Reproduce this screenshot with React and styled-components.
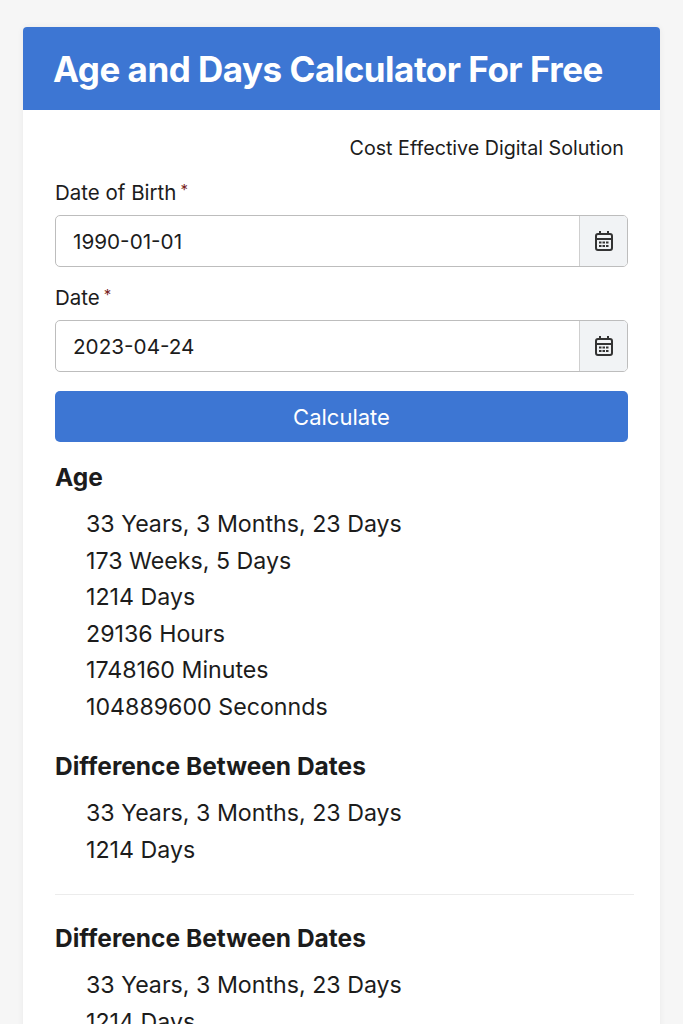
import React from "react";
import styled, { createGlobalStyle } from "styled-components";

const G = createGlobalStyle`
  body { margin:0; background:#f6f6f6; font-family: Inter, "Noto Sans", sans-serif; color:#1c1c1c; }
`;
const Card = styled.div`
  margin: 27px 23px 0 23px; background:#fff; border-radius:4px 4px 0 0;
  box-shadow: 0 0 6px rgba(0,0,0,0.06); min-height: 1000px;
`;
const Header = styled.div`
  background:#3d76d3; color:#fff; height:83px; display:flex; align-items:center;
  padding:0 30px; font-size:35px; font-weight:700; letter-spacing:-0.5px; border-radius:4px 4px 0 0;
`;
const Body = styled.div`padding: 26px 32px 0 32px;`;
const Tag = styled.div`text-align:right; font-size:19.7px; margin-right:4px; margin-bottom:20px;`;
const Label = styled.div`font-size:20.5px; margin-bottom:10px; span{color:#7a1f1f;font-size:15px;margin-left:4px;vertical-align:top;}`;
const Group = styled.div`
  display:flex; height:50px; border:1px solid #bdbdbd; border-radius:5px; overflow:hidden; margin-bottom:${p=>p.mb}px;
`;
const Input = styled.div`flex:1; display:flex; align-items:center; padding-left:17px; font-size:20.7px;`;
const Addon = styled.div`width:47px; border-left:1px solid #cfcfcf; background:#f1f3f5; display:flex; align-items:center; justify-content:center;`;
const Button = styled.div`
  height:51px; background:#3d76d3; border-radius:5px; color:#fff; font-size:22px;
  display:flex; align-items:center; justify-content:center; margin-bottom:20px;
`;
const H = styled.div`font-size:24.5px; font-weight:700; margin-top:${p=>p.mt||0}px; margin-bottom:${p=>p.mb||12}px;`;
const List = styled.div`padding-left:31px; font-size:23.2px; line-height:36.5px;`;
const Divider = styled.hr`border:none; border-top:1px solid #ececec; margin:26px -6px 28px 0;`;

const Cal = () => (
  <svg width="20" height="22" viewBox="0 0 20 22" fill="none" stroke="#333" strokeWidth="2">
    <rect x="2" y="4" width="16" height="16" rx="2"/>
    <line x1="6" y1="1" x2="6" y2="5"/><line x1="14" y1="1" x2="14" y2="5"/>
    <line x1="2" y1="9" x2="18" y2="9"/>
    <g fill="#333" stroke="none">
      {[5,8.5,12].map(x=>[11.5,15].map(y=><rect key={x+"-"+y} x={x} y={y} width="2.5" height="2"/>))}
    </g>
  </svg>
);

export default function App(){
  return (<>
    <G/>
    <Card>
      <Header>Age and Days Calculator For Free</Header>
      <Body>
        <Tag>Cost Effective Digital Solution</Tag>
        <Label>Date of Birth<span>*</span></Label>
        <Group mb={18}><Input>1990-01-01</Input><Addon><Cal/></Addon></Group>
        <Label>Date<span>*</span></Label>
        <Group mb={19}><Input>2023-04-24</Input><Addon><Cal/></Addon></Group>
        <Button>Calculate</Button>
        <H mb={14}>Age</H>
        <List>
          <div>33 Years, 3 Months, 23 Days</div>
          <div>173 Weeks, 5 Days</div>
          <div>1214 Days</div>
          <div>29136 Hours</div>
          <div>1748160 Minutes</div>
          <div>104889600 Seconnds</div>
        </List>
        <H mt={26} mb={14}>Difference Between Dates</H>
        <List>
          <div>33 Years, 3 Months, 23 Days</div>
          <div>1214 Days</div>
        </List>
        <Divider/>
        <H mb={14}>Difference Between Dates</H>
        <List>
          <div>33 Years, 3 Months, 23 Days</div>
          <div>1214 Days</div>
        </List>
      </Body>
    </Card>
  </>);
}
